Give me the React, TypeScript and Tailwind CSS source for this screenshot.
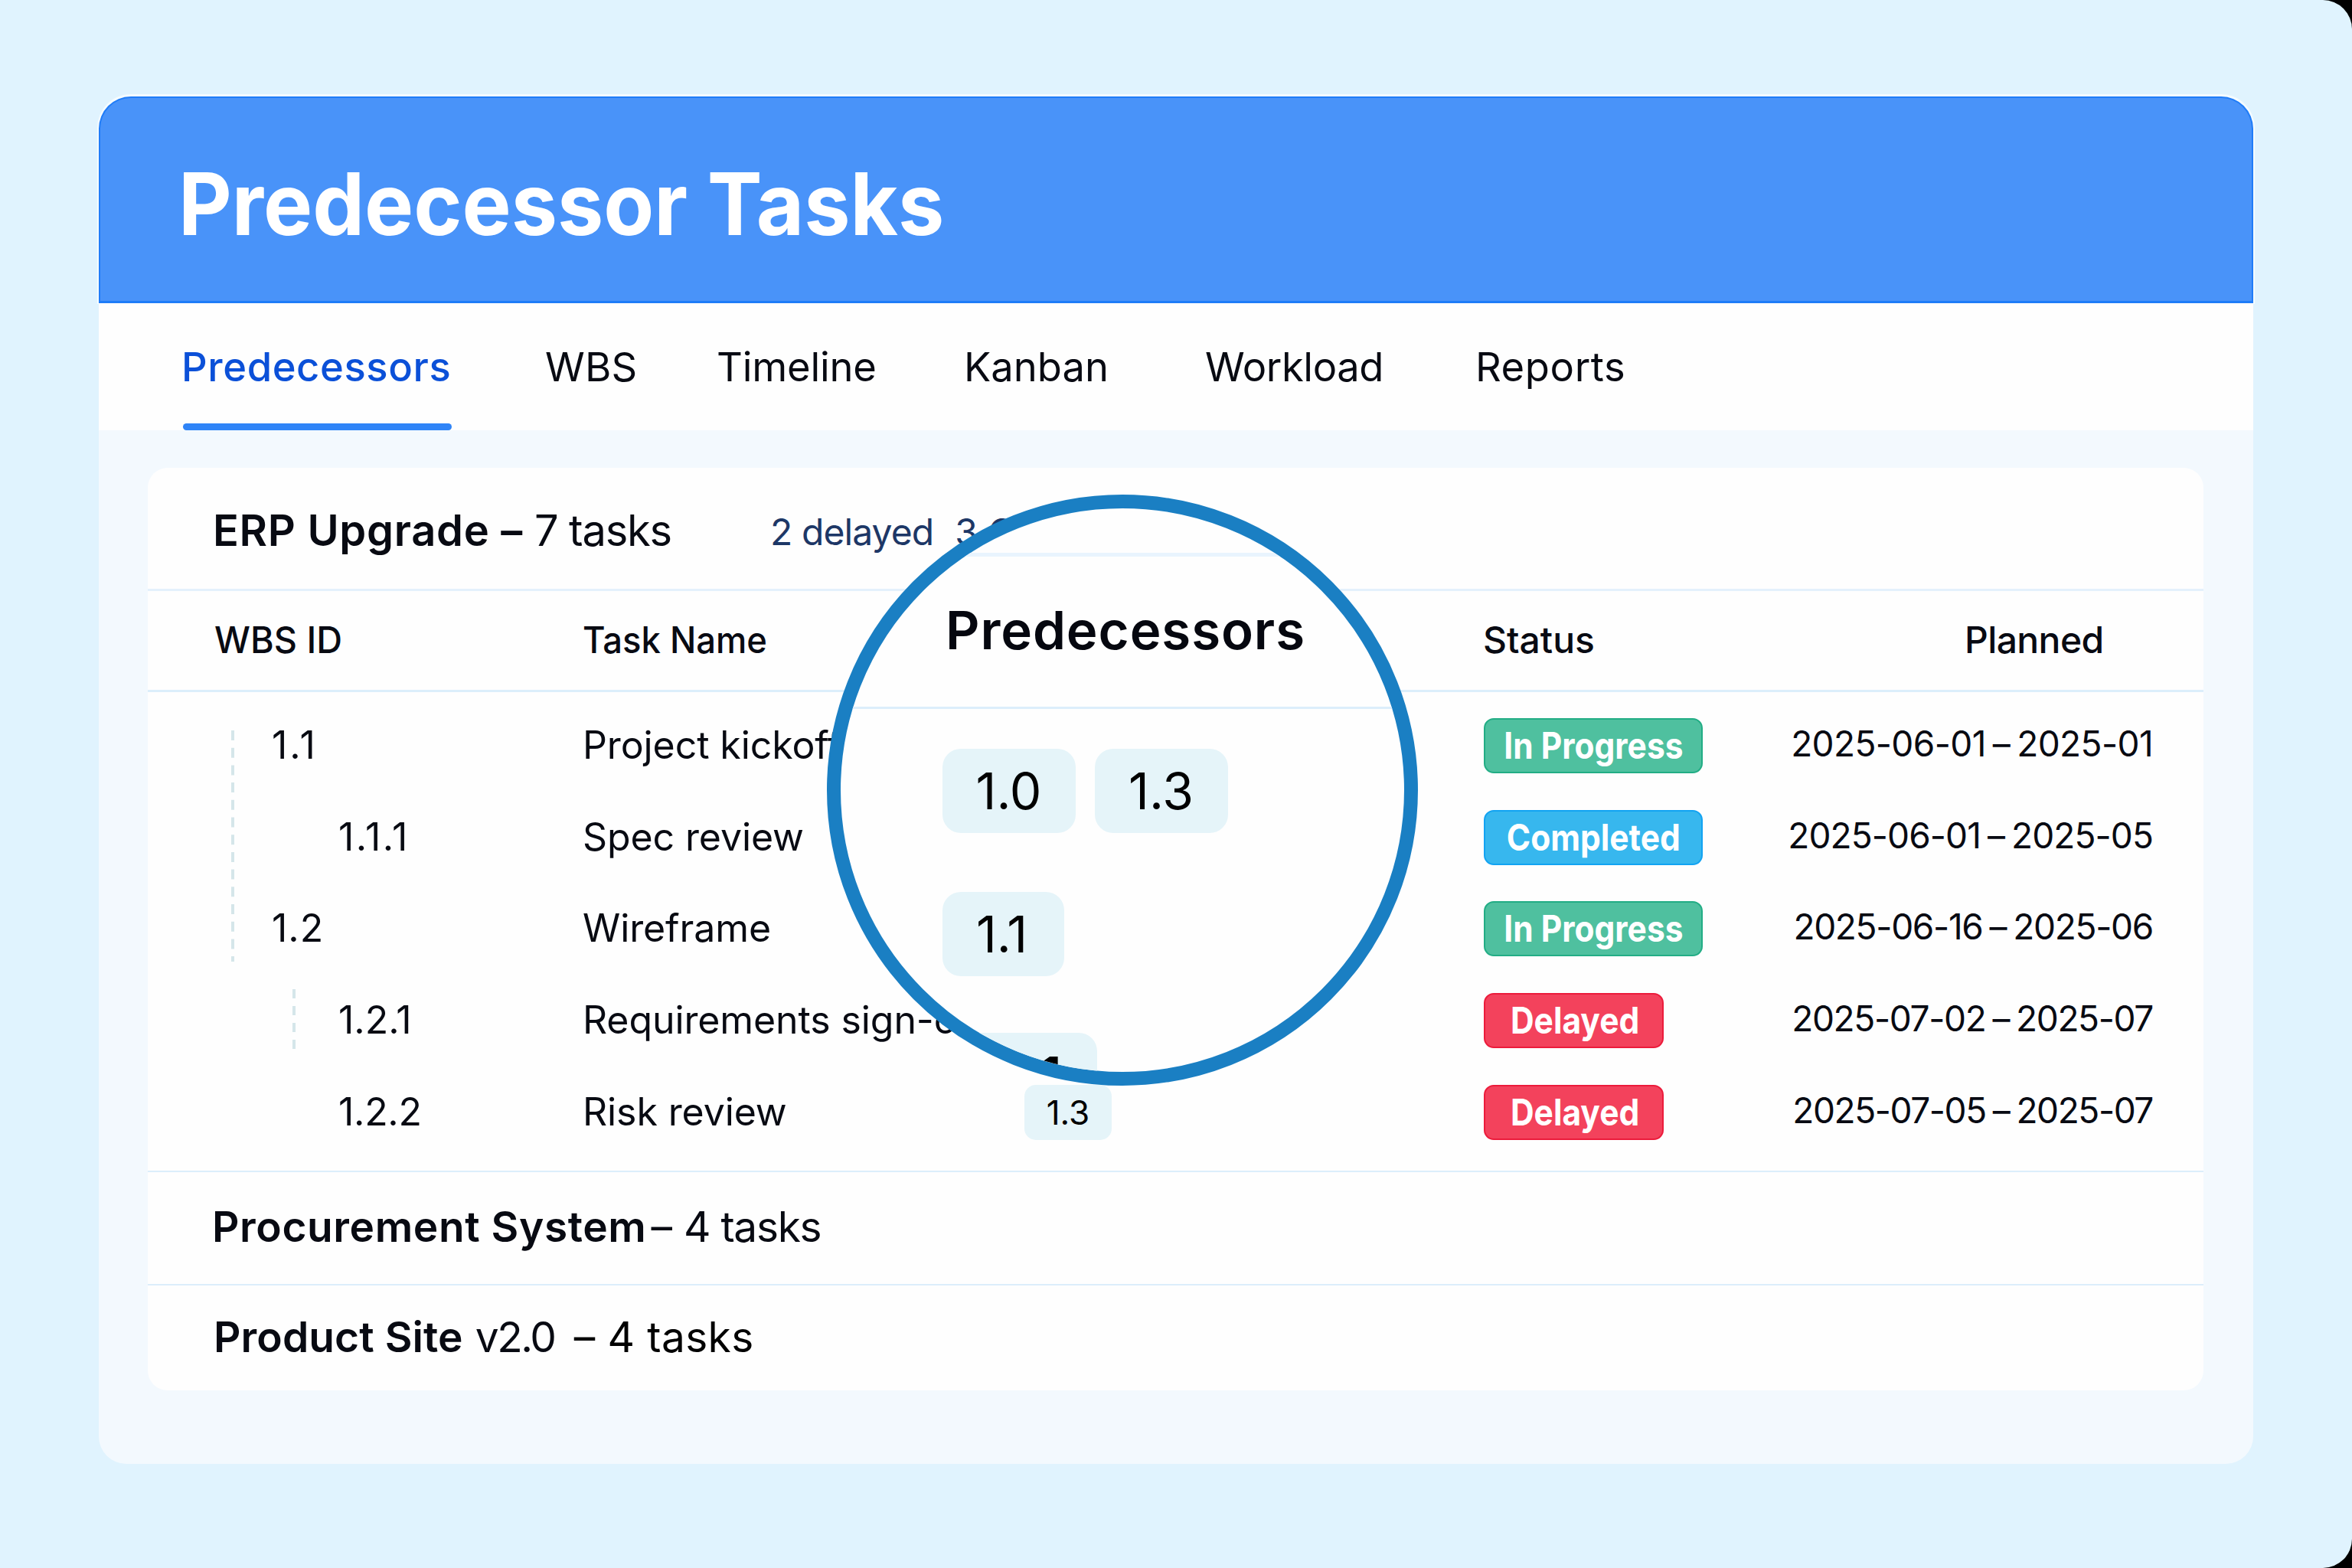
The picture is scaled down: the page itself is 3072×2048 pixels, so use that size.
import clsx from "clsx";

type Status = "In Progress" | "Completed" | "Delayed";

interface Task {
  id: string;
  idClass: string;
  name: string;
  status: Status;
  planned: string;
  end: string;
  plannedClass: string;
  predecessor?: string;
}

const tabs = [
  { label: "Predecessors", className: "font-medium tracking-[0.6px]", active: true },
  { label: "WBS", className: "tracking-[0.2px]" },
  { label: "Timeline", className: "tracking-[-0.2px]" },
  { label: "Kanban", className: "tracking-normal" },
  { label: "Workload", className: "tracking-[-0.4px]" },
  { label: "Reports", className: "tracking-[0.6px]" },
];

const tasks: Task[] = [
  { id: "1.1", idClass: "pl-[75px] tracking-[3px]", name: "Project kickoff", status: "In Progress", planned: "2025-06-01", end: "2025-01", plannedClass: "tracking-[-0.6px]" },
  { id: "1.1.1", idClass: "pl-[162px] tracking-[2.3px]", name: "Spec review", status: "Completed", planned: "2025-06-01", end: "2025-05", plannedClass: "tracking-[-0.9px]" },
  { id: "1.2", idClass: "pl-[75px] tracking-[1px]", name: "Wireframe", status: "In Progress", planned: "2025-06-16", end: "2025-06", plannedClass: "tracking-[-1.3px]" },
  { id: "1.2.1", idClass: "pl-[162px]", name: "Requirements sign-off", status: "Delayed", planned: "2025-07-02", end: "2025-07", plannedClass: "tracking-[-1.35px]" },
  { id: "1.2.2", idClass: "pl-[162px] tracking-[-0.3px]", name: "Risk review", status: "Delayed", planned: "2025-07-05", end: "2025-07", plannedClass: "tracking-[-1.4px]", predecessor: "1.3" },
];

const badgeStyles: Record<Status, string> = {
  "In Progress": "w-[286px] bg-[#4fc09f] border-[#22ad85]",
  Completed: "w-[286px] bg-[#37b7ee] border-[#12a3f2]",
  Delayed: "w-[235px] pl-[3px] bg-[#f3425c] border-[#ec1b3b]",
};

const columns = "grid grid-cols-[481px_574px_601px_403px_469px]";

function StatusBadge({ status }: { status: Status }) {
  return (
    <span
      className={clsx(
        "ml-[2px] flex h-[72px] items-center justify-center rounded-[13px] border-2 text-[48px] font-bold text-white",
        badgeStyles[status]
      )}
    >
      <span className="scale-x-[0.885] whitespace-nowrap">{status}</span>
    </span>
  );
}

function LensChip({ label, className }: { label: string; className?: string }) {
  return (
    <span
      className={clsx(
        "flex h-[110px] items-center justify-center rounded-[24px] bg-[#e5f4f9] text-[66px] text-black",
        className
      )}
    >
      {label}
    </span>
  );
}

// Magnifier over the predecessors column
function Lens() {
  return (
    <div className="absolute left-[1080px] top-[646px] size-[772px] overflow-hidden rounded-full border-[18px] border-[#1a7fc3] bg-[#fefefe]">
      <div className="h-[63px] border-b-[5px] border-[#e9f4fe]" />
      <div className="flex h-[199px] items-center border-b-[3px] border-[#dceefb] pb-[3px] pl-[137px]">
        <span className="text-[69px] font-semibold tracking-[0.9px] text-[#05070f]">Predecessors</span>
      </div>
      <div className="flex flex-col pl-[133px] pt-[52px]">
        <div className="flex gap-[25px]">
          <LensChip label="1.0" className="w-[174px] pr-px" />
          <LensChip label="1.3" className="w-[174px] pr-px" />
        </div>
        <LensChip label="1.1" className="mt-[77px] w-[159px] pr-[4px]" />
        <LensChip label="1" className="mt-[74px] w-[202px] justify-end pr-[47px] font-bold" />
      </div>
    </div>
  );
}

export default function App() {
  return (
    <div className="h-[2048px] w-[3072px] bg-black font-['Inter',sans-serif] text-[#080a12]">
      <div className="relative h-full w-full overflow-hidden rounded-r-[38px] bg-[#e0f3fe] pl-[129px] pt-[126px]">
        <div className="h-[1786px] w-[2814px] rounded-t-[42px] rounded-b-[36px] bg-[#f3f9fe]">
          <header className="flex h-[270px] items-center rounded-t-[42px] border-2 border-b-[3px] border-[#1f7cf8] bg-[#4993f9] pl-[102px] pt-[12px] shadow-[0_-1px_0_2px_#f4fbff]">
            <h1 className="origin-left scale-x-[0.953] text-[113px] font-bold text-white">Predecessor Tasks</h1>
          </header>

          <nav className="relative grid h-[166px] grid-cols-[475px_224px_323px_315px_353px_300px] bg-[#fefefe] pl-[108px] text-[52.5px]">
            {tabs.map((tab) => (
              <div key={tab.label} className="flex">
                <span
                  className={clsx(
                    "relative flex items-center whitespace-nowrap",
                    tab.className,
                    tab.active && "text-[#0b50d8]"
                  )}
                >
                  {tab.label}
                  {tab.active && (
                    <span className="absolute bottom-0 left-[2px] h-[9px] w-[351px] rounded-full bg-[#2f84f7]" />
                  )}
                </span>
              </div>
            ))}
          </nav>

          <main className="mx-[65px] ml-[64px] mt-[49px] h-[1205px] rounded-[26px] bg-[#fefefe]">
            <div className="flex h-[161px] items-center border-b-[3px] border-[#e4f1fc] pl-[85px] pt-[6px] text-[56px]">
              <span className="font-semibold tracking-[0.7px]">ERP Upgrade –</span>
              <span className="ml-[15px] tracking-[-1.2px]">7 tasks</span>
              <span className="ml-[129px] pt-[4px] text-[48px] tracking-[-0.9px] text-[#1d3766]">2 delayed</span>
              <span className="ml-[28px] pt-[4px] text-[48px] text-[#1d3766]">3 C</span>
            </div>

            <div className={clsx(columns, "h-[132px] items-center border-b-[3px] border-[#dceefb] pb-px pl-[87px] text-[48px] font-medium")}>
              <span className="origin-left scale-x-[0.975]">WBS ID</span>
              <span className="origin-left scale-x-[0.945]">Task Name</span>
              <span />
              <span className="pl-px">Status</span>
              <span className="pl-[227px] tracking-[-0.6px]">Planned</span>
            </div>

            <div className="relative h-[627px] border-b-2 border-[#dceefb] pt-[10px] text-[50px]">
              {tasks.map((task) => (
                <div key={task.id} className={clsx(columns, "h-[119.7px] items-center pl-[87px]")}>
                  <span className={clsx("pb-px", task.idClass)}>{task.id}</span>
                  <span className="whitespace-nowrap pb-px tracking-[-0.1px]">{task.name}</span>
                  <span className="flex">
                    {task.predecessor && (
                      <span className="ml-[3px] flex h-[72px] w-[114px] items-center justify-center rounded-[15px] bg-[#e5f4f9] text-[44px] text-black">
                        {task.predecessor}
                      </span>
                    )}
                  </span>
                  <span className="flex">
                    <StatusBadge status={task.status} />
                  </span>
                  <span className={clsx("-mr-[4px] flex justify-end whitespace-nowrap pb-[5px] text-[46px]", task.plannedClass)}>
                    <span>{task.planned}</span>
                    <span className="mx-[9px]">–</span>
                    <span>{task.end}</span>
                  </span>
                </div>
              ))}

              {/* hierarchy guides */}
              <svg className="absolute left-[109px] top-[50px]" width="90" height="420" fill="none" stroke="#d5e6ea" strokeWidth="4">
                <line x1="2" y1="0" x2="2" y2="302" strokeDasharray="13 9.7" />
                <line x1="82" y1="338" x2="82" y2="416" strokeDasharray="12 10" />
              </svg>
            </div>

            <div className="flex h-[148px] items-center border-b-2 border-[#dceefb] pb-[3px] pl-[84px] text-[55px]">
              <span className="font-semibold tracking-[0.6px]">Procurement System</span>
              <span className="ml-[6px]">–</span>
              <span className="ml-[15px] tracking-[-1.3px]">4 tasks</span>
            </div>

            <div className="flex h-[136px] items-center pb-[2px] pl-[86px] text-[55px]">
              <span className="font-semibold tracking-[0.1px]">Product Site</span>
              <span className="ml-[16px] tracking-[-2.4px]">v2.0</span>
              <span className="ml-[25px] tracking-[0.4px] text-black">– 4 tasks</span>
            </div>
          </main>
        </div>

        <Lens />
      </div>
    </div>
  );
}
